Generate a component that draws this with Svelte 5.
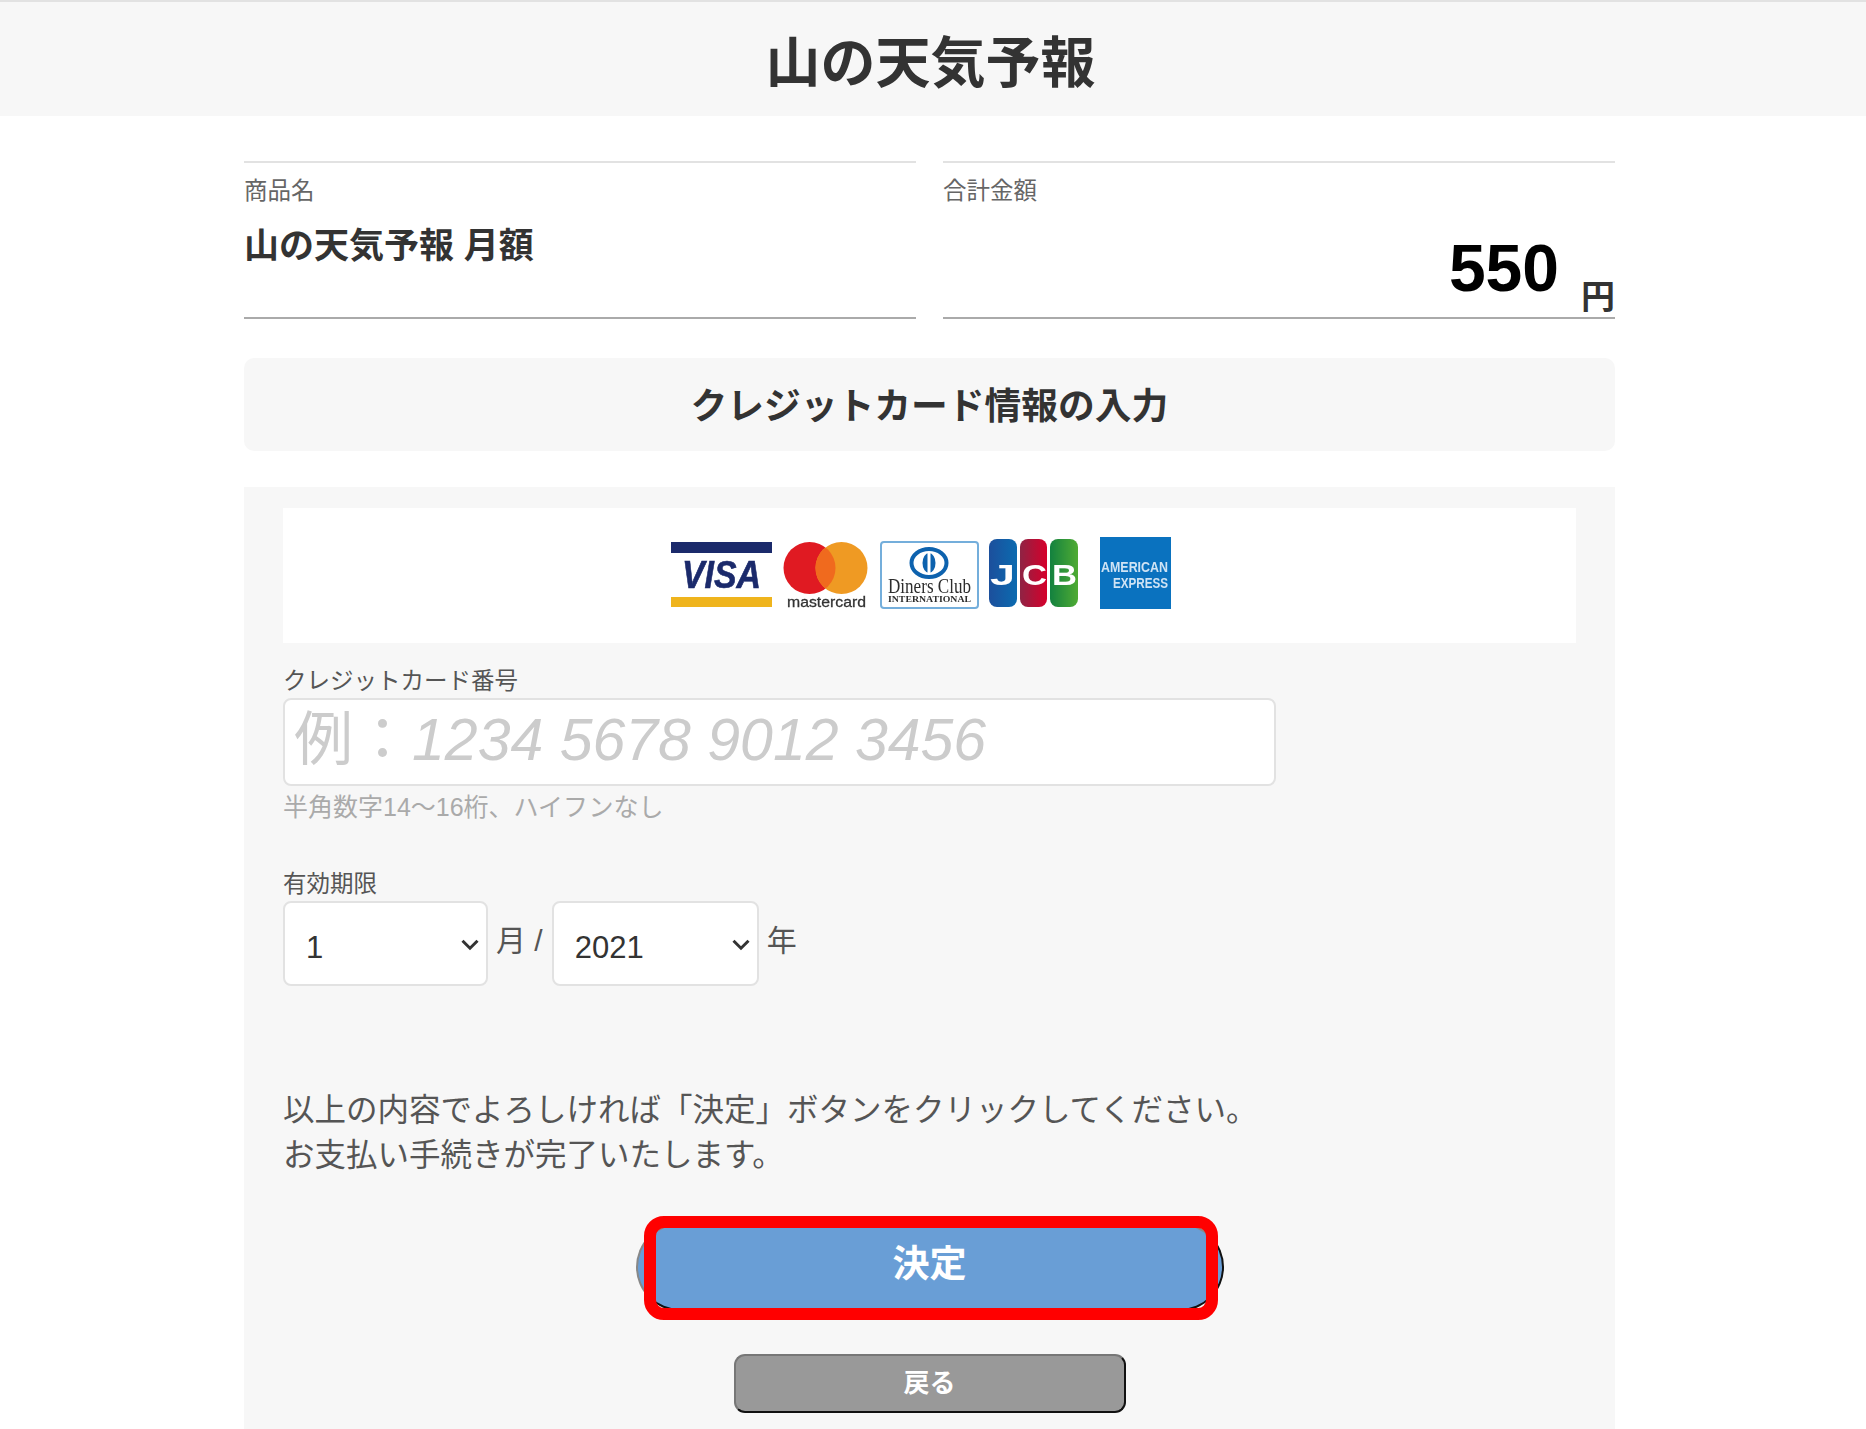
<script lang="ts">
  const months = [1, 2, 3, 4, 5, 6, 7, 8, 9, 10, 11, 12];
  const years = [2021, 2022, 2023, 2024, 2025, 2026];
</script>

<div class="page">
  <header class="site-head">
    <h1>山の天気予報</h1>
  </header>

  <main class="wrap">
    <section class="summary">
      <div class="summary__col">
        <div class="summary__label">商品名</div>
        <div class="summary__name">山の天気予報 月額</div>
      </div>
      <div class="summary__col">
        <div class="summary__label">合計金額</div>
        <div class="summary__amount"><span class="price">550</span><span class="yen">円</span></div>
      </div>
    </section>

    <h2 class="section-title">クレジットカード情報の入力</h2>

    <section class="panel">
      <div class="brands">
        <svg class="brands__img" width="504" height="76" viewBox="0 -2 504 76" role="img" aria-label="VISA, Mastercard, Diners Club, JCB, American Express">
          <defs>
            <clipPath id="mc-red"><circle cx="138.5" cy="31" r="26" /></clipPath>
            <linearGradient id="jcb-b" x1="0" x2="1" y1="0" y2="0"><stop offset="0" stop-color="#1c4f9c" /><stop offset="1" stop-color="#0b6bb0" /></linearGradient>
            <linearGradient id="jcb-r" x1="0" x2="1" y1="0" y2="0"><stop offset="0" stop-color="#8f2344" /><stop offset="1" stop-color="#d6002b" /></linearGradient>
            <linearGradient id="jcb-g" x1="0" x2="1" y1="0" y2="0"><stop offset="0" stop-color="#13813f" /><stop offset="1" stop-color="#4fab33" /></linearGradient>
          </defs>

          <rect x="0" y="5" width="101" height="11" fill="#1b2a6b" />
          <rect x="0" y="60" width="101" height="10" fill="#efb41d" />
          <text x="11" y="51" class="t-visa" textLength="79" lengthAdjust="spacingAndGlyphs">VISA</text>

          <circle cx="138.5" cy="31" r="26" fill="#e01a22" />
          <circle cx="170.5" cy="31" r="26" fill="#ef9a23" />
          <circle cx="170.5" cy="31" r="26" fill="#f06a1e" clip-path="url(#mc-red)" />
          <text x="116" y="70" class="t-mc" textLength="79" lengthAdjust="spacingAndGlyphs">mastercard</text>

          <rect x="210" y="5" width="97" height="66" rx="3" fill="#fff" stroke="#74aedb" stroke-width="2" />
          <ellipse cx="258" cy="26" rx="17.5" ry="14" fill="#fff" stroke="#0d62ae" stroke-width="4" />
          <ellipse cx="258" cy="26" rx="6.5" ry="10" fill="#0d62ae" />
          <rect x="256.5" y="15" width="3" height="22" fill="#fff" />
          <text x="217" y="56" class="t-diners" textLength="83" lengthAdjust="spacingAndGlyphs">Diners Club</text>
          <text x="217" y="65" class="t-intl" textLength="83" lengthAdjust="spacingAndGlyphs">INTERNATIONAL</text>

          <rect x="318" y="2" width="28" height="68" rx="8" fill="url(#jcb-b)" />
          <rect x="349" y="2" width="27" height="68" rx="8" fill="url(#jcb-r)" />
          <rect x="379" y="2" width="28" height="68" rx="8" fill="url(#jcb-g)" />
          <text x="319" y="48" class="t-jcb" textLength="25" lengthAdjust="spacingAndGlyphs">J</text>
          <text x="351" y="48" class="t-jcb" textLength="25" lengthAdjust="spacingAndGlyphs">C</text>
          <text x="381" y="48" class="t-jcb" textLength="25" lengthAdjust="spacingAndGlyphs">B</text>

          <rect x="429" y="0" width="71" height="72" fill="#0a72bf" />
          <text x="430" y="35" class="t-amex" textLength="67" lengthAdjust="spacingAndGlyphs">AMERICAN</text>
          <text x="442" y="51" class="t-amex" textLength="55" lengthAdjust="spacingAndGlyphs">EXPRESS</text>
        </svg>
      </div>

      <label class="field-label field-label--first" for="card-no">クレジットカード番号</label>
      <input id="card-no" class="card-input" type="text" placeholder="例：1234 5678 9012 3456" />
      <p class="hint">半角数字14〜16桁、ハイフンなし</p>

      <label class="field-label field-label--exp" for="exp-month">有効期限</label>
      <div class="expiry">
        <div class="select select--month">
          <select id="exp-month">
            {#each months as m}
              <option>{m}</option>
            {/each}
          </select>
          <svg viewBox="0 0 16 10" aria-hidden="true"><path d="M2 2l6 6 6-6" /></svg>
        </div>
        <span class="unit unit--month">月 /</span>
        <div class="select select--year">
          <select aria-label="年">
            {#each years as y}
              <option>{y}</option>
            {/each}
          </select>
          <svg viewBox="0 0 16 10" aria-hidden="true"><path d="M2 2l6 6 6-6" /></svg>
        </div>
        <span class="unit">年</span>
      </div>

      <p class="notice">以上の内容でよろしければ「決定」ボタンをクリックしてください。<br />お支払い手続きが完了いたします。</p>

      <div class="actions">
        <div class="submit-wrap">
          <button class="btn-submit" type="button">決定</button>
          <span class="callout" aria-hidden="true"></span>
        </div>
        <button class="btn-back" type="button">戻る</button>
      </div>
    </section>
  </main>
</div>

<style>
  :global(body) {
    margin: 0;
    background: #fff;
  }

  .page {
    height: 1429px;
    overflow: hidden;
    font-family: "Liberation Sans", "Noto Sans CJK JP", sans-serif;
    color: #333;
  }

  .site-head {
    display: flex;
    align-items: center;
    justify-content: center;
    height: 114px;
    padding: 0 5px 0 0;
    box-sizing: content-box;
    border-top: 2px solid #e2e2e2;
    background: #f7f7f7;
  }

  .site-head h1 {
    margin: 8px 0 0;
    font-size: 55px;
    line-height: 1.2;
    font-weight: 700;
  }

  .wrap {
    width: 1371px;
    margin-left: 244px;
  }

  .summary {
    display: grid;
    grid-template-columns: 672px 672px;
    justify-content: space-between;
    margin-top: 45px;
  }

  .summary__col {
    display: flex;
    flex-direction: column;
    height: 158px;
    box-sizing: border-box;
    border-top: 2px solid #e2e2e2;
    border-bottom: 2px solid #aaa;
    padding-top: 13px;
  }

  .summary__label {
    font-size: 23.5px;
    line-height: 30px;
    color: #666;
  }

  .summary__name {
    margin-top: 18px;
    font-size: 35px;
    line-height: 44px;
    font-weight: 700;
  }

  .summary__amount {
    display: flex;
    align-items: flex-end;
    justify-content: flex-end;
    gap: 22px;
    margin-top: auto;
    padding-bottom: 4px;
  }

  .price {
    margin-bottom: 11px;
    font-size: 66px;
    line-height: 68px;
    font-weight: 700;
    color: #000;
  }

  .yen {
    font-size: 34px;
    line-height: 32px;
    font-weight: 700;
  }

  .section-title {
    display: flex;
    align-items: center;
    justify-content: center;
    height: 93px;
    margin: 39px 0 0;
    padding-bottom: 4px;
    box-sizing: border-box;
    border-radius: 10px;
    background: #f7f7f7;
    font-size: 36.75px;
    font-weight: 700;
  }

  .panel {
    margin-top: 36px;
    padding: 21px 39px 16px;
    background: #f7f7f7;
  }

  .brands {
    display: flex;
    justify-content: center;
    align-items: center;
    height: 135px;
    padding: 0 13px 5px 0;
    box-sizing: border-box;
    background: #fff;
  }

  .brands__img {
    display: block;
    filter: blur(0.5px);
  }

  .t-visa {
    font: italic 700 38px "Liberation Sans", sans-serif;
    fill: #1b2a6b;
    stroke: #1b2a6b;
    stroke-width: 0.6;
  }

  .t-mc {
    font: 400 15px "Liberation Sans", sans-serif;
    fill: #333;
    stroke: #333;
    stroke-width: 0.3;
  }

  .t-diners {
    font: 400 20px "Liberation Serif", serif;
    fill: #2d2d2d;
  }

  .t-intl {
    font: 700 8px "Liberation Serif", serif;
    fill: #2d2d2d;
  }

  .t-jcb {
    font: 700 30px "Liberation Sans", sans-serif;
    fill: #fff;
  }

  .t-amex {
    font: 700 14px "Liberation Sans", sans-serif;
    fill: #cfe3f4;
  }

  .field-label {
    display: block;
    font-size: 23.5px;
    line-height: 30px;
    color: #555;
  }

  .field-label--first {
    margin-top: 23px;
  }

  .field-label--exp {
    margin-top: 47px;
  }

  .card-input {
    display: block;
    width: 993px;
    height: 88px;
    margin-top: 2px;
    padding: 0 9px 5px;
    box-sizing: border-box;
    border: 2px solid #e2e2e2;
    border-radius: 8px;
    background: #fff;
    font-family: inherit;
    font-size: 59px;
    color: #333;
    outline: none;
  }

  .card-input::placeholder {
    color: #ccc;
    font-style: italic;
    font-synthesis: none;
    opacity: 1;
  }

  .hint {
    margin: 6px 0 0;
    font-size: 25px;
    line-height: 30px;
    color: #aaa;
  }

  .expiry {
    display: flex;
    align-items: flex-start;
    margin-top: 2px;
  }

  .select {
    position: relative;
    height: 85px;
  }

  .select--month {
    width: 205px;
  }

  .select--year {
    width: 207px;
    margin-left: 1px;
  }

  .select select {
    appearance: none;
    width: 100%;
    height: 100%;
    padding: 8px 0 0 21px;
    box-sizing: border-box;
    border: 2px solid #e2e2e2;
    border-radius: 8px;
    background: #fff;
    font-family: inherit;
    font-size: 31px;
    color: #333;
    outline: none;
  }

  .select svg {
    position: absolute;
    top: 37px;
    right: 8px;
    width: 20px;
    height: 13px;
    fill: none;
    stroke: #333;
    stroke-width: 2.4;
    pointer-events: none;
  }

  .unit {
    margin: 20px 8px 0;
    font-size: 30px;
    line-height: 40px;
    color: #555;
    white-space: nowrap;
  }

  .notice {
    margin: 101.5px 0 0;
    font-size: 31.5px;
    line-height: 45.5px;
    color: #555;
  }

  .actions {
    display: flex;
    flex-direction: column;
    align-items: center;
    margin-top: 44.5px;
  }

  .submit-wrap {
    position: relative;
  }

  .btn-submit {
    display: block;
    width: 588px;
    height: 88px;
    padding-bottom: 13px;
    border: 2px solid;
    border-color: #888 #111 #111 #888;
    border-radius: 44px;
    background: #699ed6;
    font-family: inherit;
    font-size: 37px;
    font-weight: 700;
    color: #fff;
  }

  .callout {
    position: absolute;
    top: -7px;
    left: 8px;
    right: 6px;
    bottom: -9px;
    border: 12px solid #f00;
    border-radius: 20px;
    pointer-events: none;
  }

  .btn-back {
    width: 392px;
    height: 59px;
    margin-top: 43px;
    padding-bottom: 7px;
    border: 2px solid;
    border-color: #777 #111 #111 #777;
    border-radius: 11px;
    background: #999;
    font-family: inherit;
    font-size: 26px;
    font-weight: 700;
    color: #fff;
  }
</style>
